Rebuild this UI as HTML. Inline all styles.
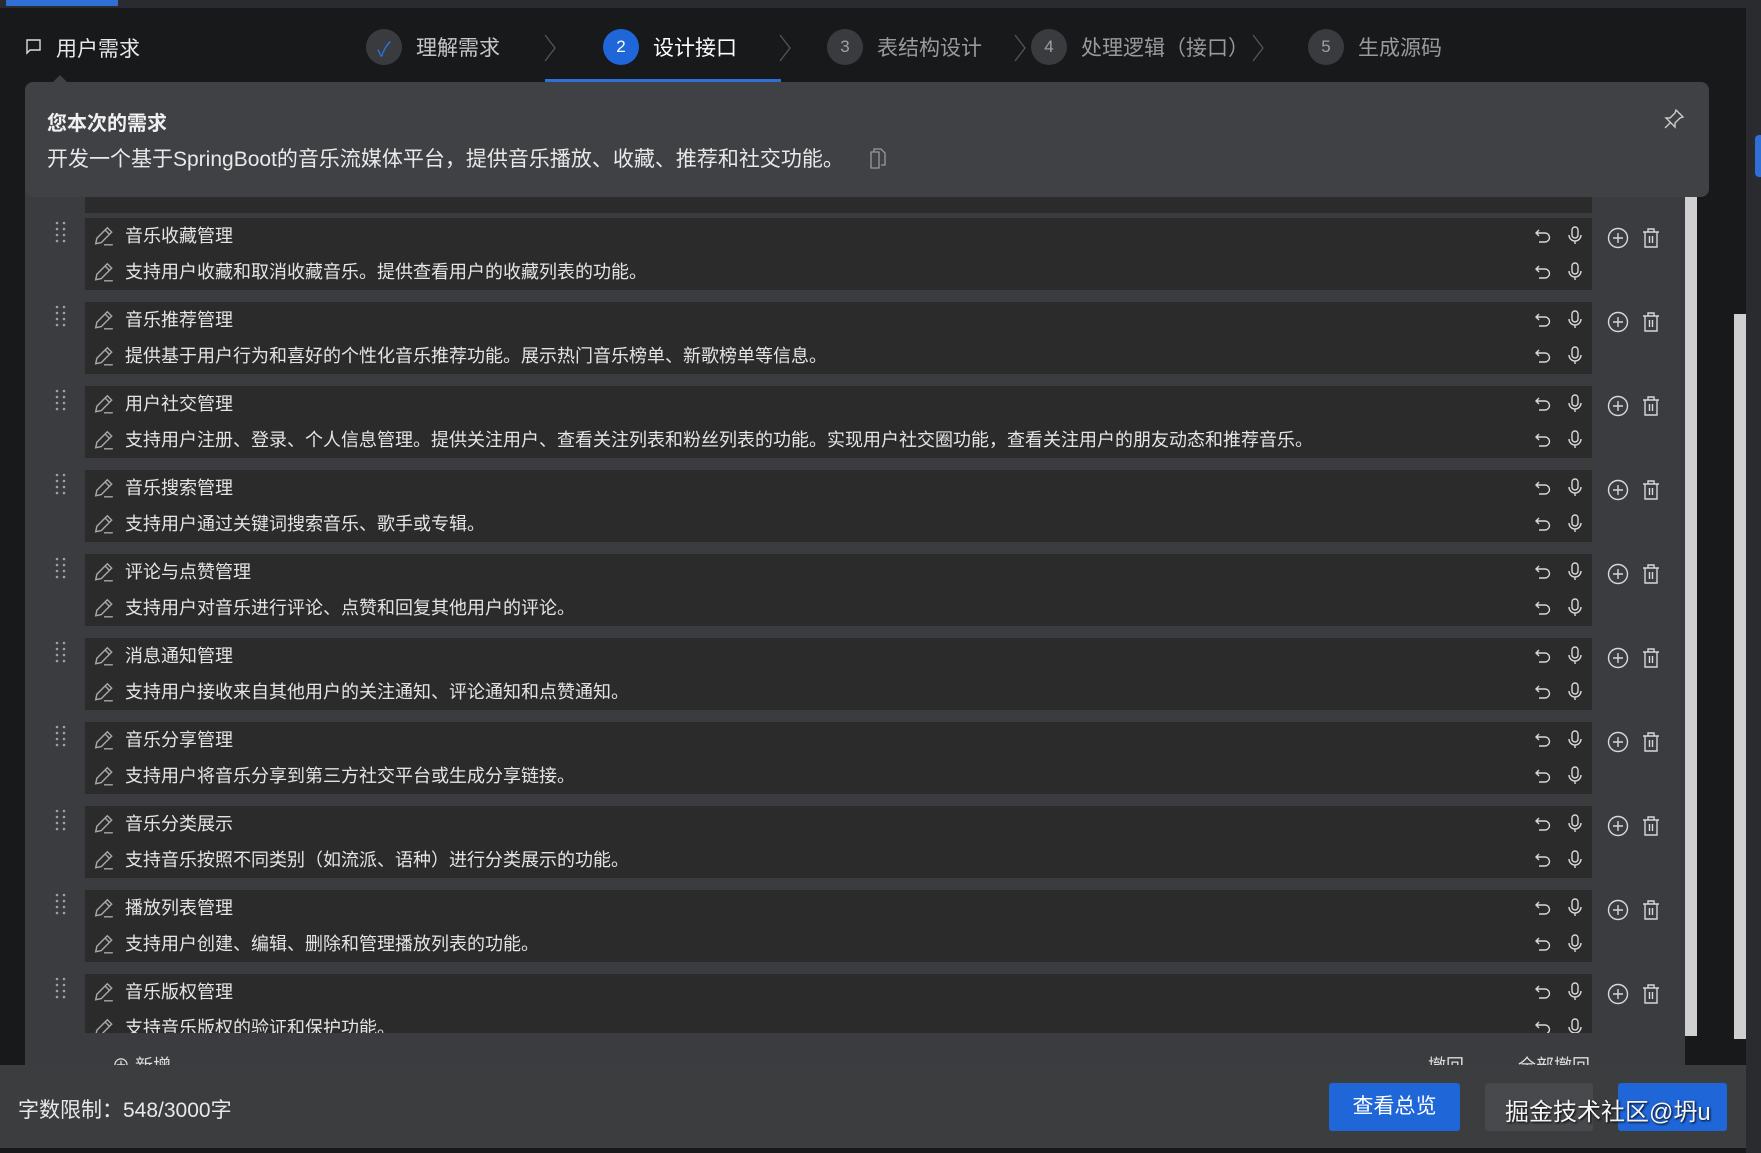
<!DOCTYPE html>
<html><head><meta charset="utf-8"><style>
*{margin:0;padding:0;box-sizing:border-box}
body{width:1761px;height:1153px;background:#18191b;position:relative;overflow:hidden;font-family:"Liberation Sans","Noto Sans CJK SC",sans-serif;color:#e6e6e6}
.a{position:absolute}
.topstrip{left:0;top:0;width:1761px;height:8px;background:#2a2b2e}
.rcol{left:1746px;top:0;width:15px;height:1153px;background:#2a2b2e}
.step{position:absolute;top:28px;height:38px;display:flex;align-items:center;font-size:21px;color:#9a9a9c;white-space:nowrap}
.c{width:36px;height:36px;border-radius:50%;background:#3a3b3e;display:flex;align-items:center;justify-content:center;font-size:17px;color:#a0a0a0;margin-right:14px}
.chev{position:absolute;top:33px}
.card{left:25px;top:82px;width:1684px;height:115px;background:#404144;border-radius:8px;z-index:3}
.panel{left:25px;top:190px;width:1660px;height:880px;background:#3b3c3f}
.clip{left:25px;top:197px;width:1660px;height:836px;overflow:hidden}
.blk{position:absolute;left:60px;width:1507px;height:72px}
.ln{position:absolute;left:0;width:1507px;height:36px;background:#2b2b2c;font-size:18px;line-height:36px;padding-left:40px;color:#e4e4e4;white-space:nowrap}
.ln svg{position:absolute}
.dots{position:absolute;left:-30px;top:3px}
.side{position:absolute;left:1522px;top:9px}
.foot{left:0;top:1065px;width:1746px;height:83px;background:#3c3d3f}
.btn{position:absolute;top:18px;height:48px;border-radius:3px;font-size:21px;line-height:48px;text-align:center;color:#fff}
</style></head><body>
<svg width="0" height="0" style="position:absolute">
<defs>
<symbol id="pen" viewBox="0 0 20 20"><path d="M2.5 17 L3.5 12 L13 2.5 L17 6.5 L7.5 16 Z M11 4.5 L15 8.5 M10 18 H18" fill="none" stroke="#a8a8a8" stroke-width="1.3"/></symbol>
<symbol id="undo" viewBox="0 0 20 20"><path d="M6 4 L3 7 L6 10 M3 7 H12 a4.5 4.5 0 0 1 0 9 H6" fill="none" stroke="#d8d8d8" stroke-width="1.4"/></symbol>
<symbol id="mic" viewBox="0 0 20 20"><rect x="7" y="2" width="6" height="11" rx="3" fill="none" stroke="#d8d8d8" stroke-width="1.4"/><path d="M4 10 a6 6 0 0 0 12 0 M10 16 V19" fill="none" stroke="#d8d8d8" stroke-width="1.4"/></symbol>
<symbol id="plus" viewBox="0 0 22 22"><circle cx="11" cy="11" r="9.5" fill="none" stroke="#d8d8d8" stroke-width="1.4"/><path d="M11 6 V16 M6 11 H16" stroke="#d8d8d8" stroke-width="1.4"/></symbol>
<symbol id="trash" viewBox="0 0 20 22"><path d="M2 5 H18 M7 5 V2 H13 V5 M4 5 V20 H16 V5 M8.5 9 V16 M11.5 9 V16" fill="none" stroke="#d8d8d8" stroke-width="1.4"/></symbol>
<symbol id="dd" viewBox="0 0 12 22"><g fill="#a0a0a0"><circle cx="2" cy="2" r="1.3"/><circle cx="9" cy="2" r="1.3"/><circle cx="2" cy="8" r="1.3"/><circle cx="9" cy="8" r="1.3"/><circle cx="2" cy="14" r="1.3"/><circle cx="9" cy="14" r="1.3"/><circle cx="2" cy="20" r="1.3"/><circle cx="9" cy="20" r="1.3"/></g></symbol>
</defs></svg>
<div class="a topstrip"></div>
<div class="a" style="left:6px;top:0;width:112px;height:6px;background:#2f6fd6"></div>
<div class="a rcol"></div>
<div class="a" style="left:1755px;top:135px;width:6px;height:42px;background:#2f6fd6;border-radius:4px 0 0 4px"></div>

<svg class="a" style="left:25px;top:38px" width="18" height="18" viewBox="0 0 18 18"><path d="M2 2 H15 V12 H5 L2 15 Z" fill="none" stroke="#ddd" stroke-width="1.4"/></svg>
<div class="a" style="left:56px;top:33px;font-size:21px;color:#e8e8e8">用户需求</div>
<div class="a" style="left:52px;top:75px;width:0;height:0;border-left:8px solid transparent;border-right:8px solid transparent;border-bottom:8px solid #404144"></div>

<div class="step" style="left:366px"><div class="c" style="color:#2f6fd6;font-size:20px">✓</div><span style="color:#c8c8c8">理解需求</span></div>
<div class="step" style="left:603px"><div class="c" style="background:#1f66d9;color:#fff">2</div><span style="color:#fff">设计接口</span></div>
<div class="step" style="left:827px"><div class="c">3</div>表结构设计</div>
<div class="step" style="left:1031px"><div class="c">4</div>处理逻辑（接口）</div>
<div class="step" style="left:1308px"><div class="c">5</div>生成源码</div>
<svg class="a chev" style="left:543px" width="14" height="30"><path d="M2 2 L12 15 L2 28" fill="none" stroke="#555" stroke-width="1.3"/></svg>
<svg class="a chev" style="left:778px" width="14" height="30"><path d="M2 2 L12 15 L2 28" fill="none" stroke="#555" stroke-width="1.3"/></svg>
<svg class="a chev" style="left:1013px" width="14" height="30"><path d="M2 2 L12 15 L2 28" fill="none" stroke="#555" stroke-width="1.3"/></svg>
<svg class="a chev" style="left:1251px" width="14" height="30"><path d="M2 2 L12 15 L2 28" fill="none" stroke="#555" stroke-width="1.3"/></svg>
<div class="a" style="left:545px;top:79px;width:236px;height:3px;background:#2f6fd6"></div>

<div class="a panel"></div>
<div class="a" style="left:1685px;top:196px;width:12px;height:840px;background:#d0d0d0"></div>
<div class="a" style="left:1734px;top:314px;width:12px;height:725px;background:#cfcfcf"></div>

<div class="a clip">
<div class="blk" style="top:-56px"><div class="ln" style="top:0"></div><div class="ln" style="top:36px"></div></div>
<div id="rows"></div>
</div>
<div class="a" style="left:112px;top:1052px;font-size:18px;color:#ddd">⊕ 新增</div>
<div class="a" style="left:1428px;top:1052px;font-size:18px;color:#ddd">撤回</div>
<div class="a" style="left:1518px;top:1052px;font-size:18px;color:#ddd">全部撤回</div>

<div class="a card">
<div class="a" style="left:22px;top:25px;font-size:20px;font-weight:bold;color:#f0f0f0">您本次的需求</div>
<div class="a" style="left:22px;top:61px;font-size:21px;color:#e8e8e8;white-space:nowrap">开发一个基于SpringBoot的音乐流媒体平台，提供音乐播放、收藏、推荐和社交功能。</div>
<svg class="a" style="left:844px;top:66px" width="18" height="22" viewBox="0 0 18 22"><path d="M5 4 V1 H12 L16 5 V17 H12 M2 4 H10 V20 H2 Z" fill="none" stroke="#999" stroke-width="1.3"/></svg>
<svg class="a" style="left:1638px;top:26px" width="22" height="22" viewBox="0 0 22 22"><path d="M13 2 L20 9 L17 10 L12 15 L12 19 L3 10 L7 10 L12 5 Z M7.5 14.5 L2 20" fill="none" stroke="#ccc" stroke-width="1.4"/></svg>
</div>

<div class="a foot">
<div class="a" style="left:18px;top:29px;font-size:21px;color:#e8e8e8">字数限制：548/3000字</div>
<div class="btn" style="left:1329px;width:131px;background:#1f66d9">查看总览</div>
<div class="btn" style="left:1485px;width:108px;background:#48494c"></div>
<div class="btn" style="left:1618px;width:109px;background:#1f66d9"></div>
<div class="a" style="left:1505px;top:27px;font-size:24px;color:#f4f4f4;white-space:nowrap;text-shadow:1px 1px 2px #000">掘金技术社区@坍u</div>
</div>

<script>
var d=[["音乐收藏管理","支持用户收藏和取消收藏音乐。提供查看用户的收藏列表的功能。"],
["音乐推荐管理","提供基于用户行为和喜好的个性化音乐推荐功能。展示热门音乐榜单、新歌榜单等信息。"],
["用户社交管理","支持用户注册、登录、个人信息管理。提供关注用户、查看关注列表和粉丝列表的功能。实现用户社交圈功能，查看关注用户的朋友动态和推荐音乐。"],
["音乐搜索管理","支持用户通过关键词搜索音乐、歌手或专辑。"],
["评论与点赞管理","支持用户对音乐进行评论、点赞和回复其他用户的评论。"],
["消息通知管理","支持用户接收来自其他用户的关注通知、评论通知和点赞通知。"],
["音乐分享管理","支持用户将音乐分享到第三方社交平台或生成分享链接。"],
["音乐分类展示","支持音乐按照不同类别（如流派、语种）进行分类展示的功能。"],
["播放列表管理","支持用户创建、编辑、删除和管理播放列表的功能。"],
["音乐版权管理","支持音乐版权的验证和保护功能。"]];
var h="";
function line(t,top){return '<div class="ln" style="top:'+top+'px"><svg style="left:8px;top:7px" width="22" height="22"><use href="#pen"/></svg>'+t+
'<svg style="left:1448px;top:8px" width="20" height="20"><use href="#undo"/></svg><svg style="left:1480px;top:7px" width="20" height="20"><use href="#mic"/></svg></div>';}
for(var i=0;i<d.length;i++){var t=21+84*i;
h+='<div class="blk" style="top:'+t+'px"><svg class="dots" width="12" height="22"><use href="#dd"/></svg>'+line(d[i][0],0)+line(d[i][1],36)+
'<svg class="side" width="22" height="22"><use href="#plus"/></svg><svg class="side" style="left:1556px" width="20" height="22"><use href="#trash"/></svg></div>';}
document.getElementById("rows").innerHTML=h;
</script>
</body></html>
